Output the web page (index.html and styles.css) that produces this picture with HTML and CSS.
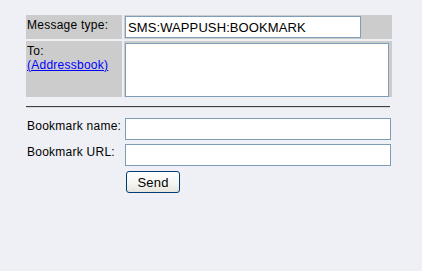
FILE: index.html
```html
<!DOCTYPE html>
<html>
<head>
<meta charset="utf-8">
<link rel="stylesheet" href="styles.css">
</head>
<body>
<div class="page">
  <div class="msg-table">
    <div class="label-cell">Message type:</div>
    <div class="field-cell"><input class="type-input" type="text" value="SMS:WAPPUSH:BOOKMARK"></div>
    <div class="label-cell">To:<br><a class="addr-link" href="#">(Addressbook)</a></div>
    <div class="field-cell"><textarea class="to-area"></textarea></div>
  </div>
  <div class="rule"></div>
  <div class="form-grid">
    <div class="form-label">Bookmark name:</div>
    <input class="form-input" type="text">
    <div class="form-label">Bookmark URL:</div>
    <input class="form-input" type="text">
    <div></div>
    <div class="btn-cell"><button class="send-btn" type="button">Send</button></div>
  </div>
</div>
</body>
</html>
```
FILE: styles.css
```css
html, body {
  margin: 0;
  padding: 0;
  background: #eff0f5;
}
body {
  font-family: "Liberation Sans", Arial, sans-serif;
  font-size: 12px;
  color: #000;
}
.page {
  padding: 15px 0 0 26px;
}
.msg-table {
  display: grid;
  grid-template-columns: 96px 268px;
  grid-template-rows: 24px 56px;
  gap: 2px;
}
.label-cell {
  background: #cccccc;
  padding: 3px 1px 1px 1px;
  line-height: 14px;
  letter-spacing: 0.25px;
}
.field-cell {
  background: #cccccc;
  padding: 1px;
}
.addr-link {
  color: #0000ff;
  text-decoration: underline;
}
.type-input {
  display: block;
  box-sizing: border-box;
  width: 236px;
  height: 22px;
  border: 1px solid #7f9db9;
  padding: 0 2px;
  margin: 0;
  font-family: "Liberation Sans", Arial, sans-serif;
  font-size: 13px;
  letter-spacing: 0.1px;
  background: #fff;
  outline: none;
}
.to-area {
  display: block;
  box-sizing: border-box;
  width: 264px;
  height: 54px;
  margin: 1px 0 0 0;
  border: 1px solid #7f9db9;
  padding: 1px;
  resize: none;
  background: #fff;
  font-family: "Liberation Sans", Arial, sans-serif;
  font-size: 13px;
}
.rule {
  margin-top: 9px;
  width: 364px;
  height: 0;
  border-top: 1px solid #404040;
  border-bottom: 1px solid #d6d6d6;
}
.form-grid {
  margin-top: 10px;
  display: grid;
  grid-template-columns: 99px 266px;
  row-gap: 4px;
}
.form-label {
  padding-top: 1px;
  padding-left: 1px;
  line-height: 14px;
  letter-spacing: 0.25px;
}
.form-input {
  display: block;
  box-sizing: border-box;
  width: 266px;
  height: 22px;
  border: 1px solid #7f9db9;
  padding: 0 2px;
  margin: 0;
  font-family: "Liberation Sans", Arial, sans-serif;
  font-size: 13px;
  background: #fff;
}
.btn-cell {
  padding-top: 1px;
  padding-left: 1px;
}
.send-btn {
  display: block;
  box-sizing: border-box;
  width: 54px;
  height: 22px;
  margin: 0;
  padding: 0;
  border: 1px solid #003c74;
  border-radius: 3px;
  background: linear-gradient(#ffffff, #f4f4f0 60%, #e6e5dd);
  font-family: "Liberation Sans", Arial, sans-serif;
  font-size: 13px;
  letter-spacing: 0.2px;
  color: #000;
}
```
